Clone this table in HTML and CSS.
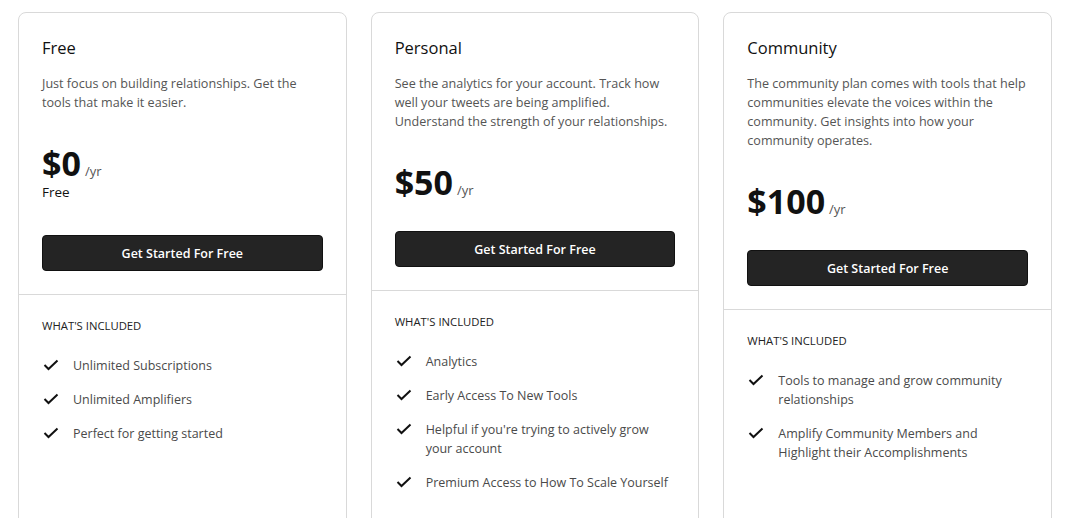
FILE: index.html
```html
<!DOCTYPE html>
<html lang="en">
<head>
    <meta charset="UTF-8">
    <meta name="viewport" content="width=device-width, initial-scale=1.0">
    <title>Pricing</title>
    <link rel="stylesheet" href="styles.css">
</head>
<body>
    <div class="plans">
        <div class="card">
            <div class="card-top">
                <h2 class="plan-name">Free</h2>
                <p class="plan-desc">Just focus on building relationships. Get the tools that make it easier.</p>
                <div class="price"><span class="amount">$0</span> <span class="per">/yr</span></div>
                <div class="price-note">Free</div>
                <button class="cta">Get Started For Free</button>
            </div>
            <div class="card-bottom">
                <h3 class="included">WHAT'S INCLUDED</h3>
                <ul class="features">
                    <li><svg class="check" viewBox="0 0 16 12"><polyline points="1.5,6 5.5,10 14.5,1.5"/></svg><span>Unlimited Subscriptions</span></li>
                    <li><svg class="check" viewBox="0 0 16 12"><polyline points="1.5,6 5.5,10 14.5,1.5"/></svg><span>Unlimited Amplifiers</span></li>
                    <li><svg class="check" viewBox="0 0 16 12"><polyline points="1.5,6 5.5,10 14.5,1.5"/></svg><span>Perfect for getting started</span></li>
                </ul>
            </div>
        </div>

        <div class="card">
            <div class="card-top">
                <h2 class="plan-name">Personal</h2>
                <p class="plan-desc">See the analytics for your account. Track how well your tweets are being amplified. Understand the strength of your relationships.</p>
                <div class="price"><span class="amount">$50</span> <span class="per">/yr</span></div>
                <button class="cta">Get Started For Free</button>
            </div>
            <div class="card-bottom">
                <h3 class="included">WHAT'S INCLUDED</h3>
                <ul class="features">
                    <li><svg class="check" viewBox="0 0 16 12"><polyline points="1.5,6 5.5,10 14.5,1.5"/></svg><span>Analytics</span></li>
                    <li><svg class="check" viewBox="0 0 16 12"><polyline points="1.5,6 5.5,10 14.5,1.5"/></svg><span>Early Access To New Tools</span></li>
                    <li><svg class="check" viewBox="0 0 16 12"><polyline points="1.5,6 5.5,10 14.5,1.5"/></svg><span>Helpful if you're trying to actively grow your account</span></li>
                    <li><svg class="check" viewBox="0 0 16 12"><polyline points="1.5,6 5.5,10 14.5,1.5"/></svg><span>Premium Access to How To Scale Yourself</span></li>
                </ul>
            </div>
        </div>

        <div class="card">
            <div class="card-top">
                <h2 class="plan-name">Community</h2>
                <p class="plan-desc">The community plan comes with tools that help communities elevate the voices within the community. Get insights into how your community operates.</p>
                <div class="price"><span class="amount">$100</span> <span class="per">/yr</span></div>
                <button class="cta">Get Started For Free</button>
            </div>
            <div class="card-bottom">
                <h3 class="included">WHAT'S INCLUDED</h3>
                <ul class="features">
                    <li><svg class="check" viewBox="0 0 16 12"><polyline points="1.5,6 5.5,10 14.5,1.5"/></svg><span>Tools to manage and grow community relationships</span></li>
                    <li><svg class="check" viewBox="0 0 16 12"><polyline points="1.5,6 5.5,10 14.5,1.5"/></svg><span>Amplify Community Members and Highlight their Accomplishments</span></li>
                </ul>
            </div>
        </div>
    </div>
</body>
</html>
```

FILE: styles.css
```css
body {
    margin: 0;
    font-family: "Open Sans", "Noto Sans", sans-serif;
    background-color: #fff;
    color: #111;
}
.plans {
    display: grid;
    grid-template-columns: repeat(3, 1fr);
    gap: 24px;
    padding: 12px 18px 0;
    align-items: start;
}
.card {
    border: 1px solid #d9d9d9;
    border-radius: 8px;
    background-color: #fff;
    min-height: 560px;
}
.card-top {
    padding: 24px 23px 23px;
}
.plan-name {
    margin: 0;
    font-size: 16.5px;
    font-weight: 400;
    line-height: 22px;
    color: #111;
}
.plan-desc {
    margin: 15px 0 0;
    font-size: 12.6px;
    line-height: 19px;
    color: #555;
}
.price {
    margin-top: 34px;
    height: 34px;
    line-height: 34px;
    display: flex;
    align-items: baseline;
    gap: 4px;
}
.amount {
    font-size: 34px;
    font-weight: 700;
    color: #111;
}
.per {
    font-size: 13px;
    line-height: 1;
    color: #555;
}
.price-note {
    margin-top: 1px;
    font-size: 13.5px;
    line-height: 22px;
    color: #111;
}
.cta {
    display: block;
    width: 100%;
    height: 36px;
    margin-top: 32px;
    background-color: #242424;
    color: #fff;
    border: 1px solid #111;
    border-radius: 4px;
    font-family: inherit;
    font-size: 12.5px;
    font-weight: 600;
    cursor: pointer;
}
.card-bottom {
    border-top: 1px solid #d9d9d9;
    padding: 23px 23px;
}
.included {
    margin: 0;
    font-size: 11.3px;
    font-weight: 500;
    line-height: 16px;
    color: #222;
}
.features {
    list-style: none;
    margin: 22px 0 0;
    padding: 0;
    display: flex;
    flex-direction: column;
    gap: 15px;
}
.features li {
    display: flex;
    align-items: flex-start;
    gap: 14px;
    font-size: 12.5px;
    line-height: 19px;
    color: #4a4a4a;
}
.check {
    flex: none;
    width: 16px;
    height: 12px;
    margin: 3px 0 0 1px;
    fill: none;
    stroke: #111;
    stroke-width: 2;
}
```
